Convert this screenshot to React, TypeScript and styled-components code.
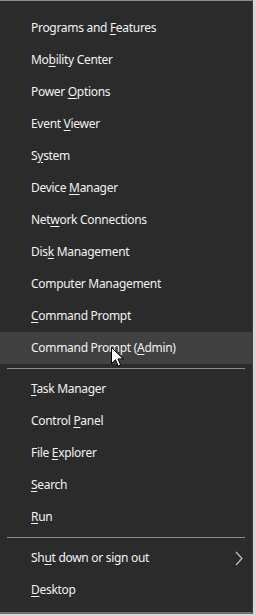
import React from "react";
import styled, { createGlobalStyle } from "styled-components";

const GlobalStyle = createGlobalStyle`
  html, body {
    margin: 0;
    padding: 0;
    background: #d6d6d6;
  }
  body {
    font-family: "Noto Sans", "Open Sans", sans-serif;
  }
`;

const Menu = styled.div`
  width: 253px;
  height: 614px;
  box-sizing: border-box;
  background-color: #2b2b2b;
  border-top: 1px solid #8c8c8c;
  border-right: 1px solid #3c3c3c;
  border-bottom: 2px solid #707070;
  padding-top: 11px;
  display: flex;
  flex-direction: column;
`;

const Item = styled.div<{ $active?: boolean }>`
  position: relative;
  height: 32px;
  display: flex;
  align-items: center;
  padding-left: 31px;
  padding-right: 9px;
  font-size: 12px;
  color: #f2f2f2;
  background-color: ${(p) => (p.$active ? "#414141" : "transparent")};
`;

const Label = styled.span`
  flex: 1;
  white-space: nowrap;
  letter-spacing: -0.3px;
  padding-bottom: 1px;

  u {
    text-decoration-thickness: 1px;
    text-underline-offset: 2px;
  }
`;

const Separator = styled.div`
  height: 9px;
  display: flex;
  align-items: center;
  padding: 0 7px;

  &::after {
    content: "";
    flex: 1;
    height: 1px;
    background-color: #8a8a8a;
  }
`;

const Chevron = styled.svg`
  width: 8px;
  height: 15px;
`;

const Cursor = styled.svg`
  position: absolute;
  left: 111px;
  top: 15px;
  width: 13px;
  height: 20px;
`;

type Entry = { pre: string; key: string; post: string; active?: boolean; sub?: boolean };

const groups: Entry[][] = [
  [
    { pre: "Programs and ", key: "F", post: "eatures" },
    { pre: "Mo", key: "b", post: "ility Center" },
    { pre: "Power ", key: "O", post: "ptions" },
    { pre: "Event ", key: "V", post: "iewer" },
    { pre: "S", key: "y", post: "stem" },
    { pre: "Device ", key: "M", post: "anager" },
    { pre: "Net", key: "w", post: "ork Connections" },
    { pre: "Dis", key: "k", post: " Management" },
    { pre: "Computer Management", key: "", post: "" },
    { pre: "", key: "C", post: "ommand Prompt" },
    { pre: "Command Prompt (", key: "A", post: "dmin)", active: true },
  ],
  [
    { pre: "", key: "T", post: "ask Manager" },
    { pre: "Control ", key: "P", post: "anel" },
    { pre: "File ", key: "E", post: "xplorer" },
    { pre: "", key: "S", post: "earch" },
    { pre: "", key: "R", post: "un" },
  ],
  [
    { pre: "Sh", key: "u", post: "t down or sign out", sub: true },
    { pre: "", key: "D", post: "esktop" },
  ],
];

function App() {
  return (
    <>
      <GlobalStyle />
      <Menu>
        {groups.map((group, gi) => (
          <React.Fragment key={gi}>
            {gi > 0 && <Separator />}
            {group.map((e) => (
              <Item key={e.pre + e.key + e.post} $active={e.active}>
                <Label>
                  {e.pre}
                  {e.key && <u>{e.key}</u>}
                  {e.post}
                </Label>
                {e.sub && (
                  <Chevron viewBox="0 0 8 15">
                    <path d="M1 1 L7 7.5 L1 14" fill="none" stroke="#a9c6ee" strokeWidth="1.2" />
                  </Chevron>
                )}
                {e.active && (
                  <Cursor viewBox="0 0 13 20">
                    <path
                      d="M0.5 0.5 L0.5 16.5 L4.5 12.8 L7.2 19 L9.6 18 L7 11.9 L12.3 11.9 Z"
                      fill="#fff"
                      stroke="#000"
                      strokeWidth="1"
                      strokeLinejoin="miter"
                    />
                  </Cursor>
                )}
              </Item>
            ))}
          </React.Fragment>
        ))}
      </Menu>
    </>
  );
}

export default App;
